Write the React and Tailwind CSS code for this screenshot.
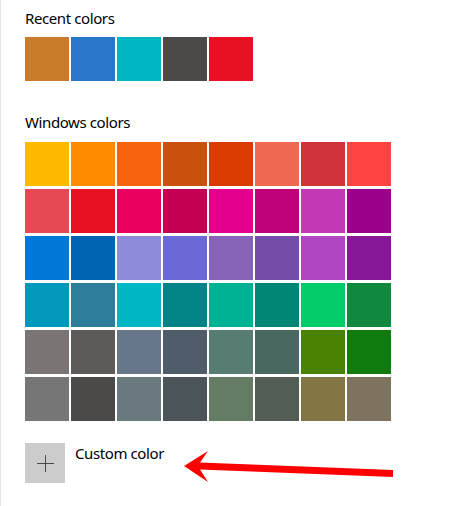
import React from "react";

const recent = ["#CA7A2B", "#2776CA", "#00B7C3", "#4C4A48", "#E81123"];

const windowsColors = [
  ["#FFB900", "#FF8C00", "#F7630C", "#CA5010", "#DA3B01", "#EF6950", "#D13438", "#FF4343"],
  ["#E74856", "#E81123", "#EA005E", "#C30052", "#E3008C", "#BF0077", "#C239B3", "#9A0089"],
  ["#0078D7", "#0063B1", "#8E8CD8", "#6B69D6", "#8764B8", "#744DA9", "#B146C2", "#881798"],
  ["#0099BC", "#2D7D9A", "#00B7C3", "#038387", "#00B294", "#018574", "#00CC6A", "#10893E"],
  ["#7A7574", "#5D5A58", "#68768A", "#515C6B", "#567C73", "#486860", "#498205", "#107C10"],
  ["#767676", "#4C4A48", "#69797E", "#4A5459", "#647C64", "#525E54", "#847545", "#7E735F"],
];

const Swatch = ({ color }) => (
  <div className="w-[44px] h-[44px]" style={{ backgroundColor: color }} />
);

const App = () => {
  return (
    <div
      className="relative w-[476px] h-[506px] bg-white border-l border-[#e6e6e6] pl-[24px] pt-[8px] text-black overflow-hidden"
      style={{ fontFamily: '"Segoe UI", "Noto Sans", sans-serif' }}
    >
      <h2 className="text-[15px] leading-[20px] tracking-[-0.4px] font-normal">Recent colors</h2>
      <div className="flex gap-[2px] mt-[9px]">
        {recent.map((c, i) => (
          <Swatch key={i} color={c} />
        ))}
      </div>

      <h2 className="text-[15px] leading-[20px] tracking-[-0.4px] font-normal mt-[31px]">Windows colors</h2>
      <div className="flex flex-col gap-[3px] mt-[10px]">
        {windowsColors.map((row, r) => (
          <div key={r} className="flex gap-[2px]">
            {row.map((c, i) => (
              <Swatch key={i} color={c} />
            ))}
          </div>
        ))}
      </div>

      <div className="flex items-start gap-[10px] mt-[22px]">
        <button className="w-[40px] h-[40px] bg-[#cccccc] flex items-center justify-center">
          <svg width="17" height="17" viewBox="0 0 17 17">
            <path d="M8.5 0v17M0 8.5h17" stroke="#4a4a4a" strokeWidth="1" />
          </svg>
        </button>
        <span className="text-[15px] leading-[20px] tracking-[-0.4px]">Custom color</span>
      </div>

      {/* red annotation arrow */}
      <svg className="absolute left-0 top-0 pointer-events-none" width="476" height="506">
        <polygon
          points="183,466 207,451 199,462.5 392,470 392,477 199,469.5 207,482"
          fill="#ff0000"
        />
      </svg>
    </div>
  );
};

export default App;
